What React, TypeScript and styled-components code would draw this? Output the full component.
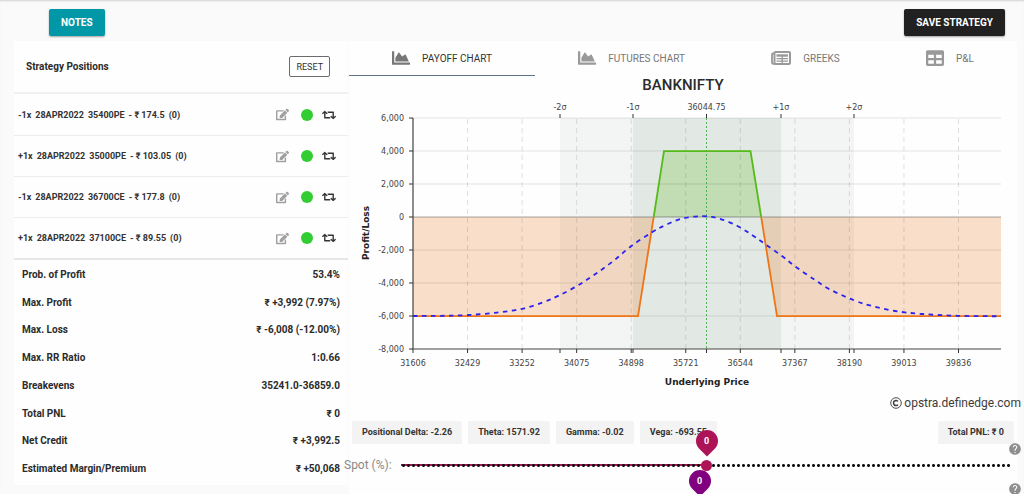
import React, { useState } from "react";
import styled, { createGlobalStyle } from "styled-components";
import { FaChartArea, FaEdit, FaRetweet, FaTable } from "react-icons/fa";
import { MdHelp } from "react-icons/md";

const GlobalStyle = createGlobalStyle`
  *, *::before, *::after { box-sizing: border-box; }
  html { scrollbar-width: none; }
  body {
    margin: 0;
    background: #fafafa;
    color: #2b2b2b;
    font-family: Roboto, "Liberation Sans", sans-serif;
    font-size: 10px;
  }
  button { font-family: inherit; cursor: pointer; }
`;

const Page = styled.div`
  min-height: 100vh;
  overflow: hidden;
  box-shadow: inset 0 2px 2px -1px rgba(0, 0, 0, 0.16);
`;

const Toolbar = styled.header`
  display: flex;
  justify-content: space-between;
  padding: 9px 19px 5px 49px;
`;

const RaisedButton = styled.button<{ $bg: string }>`
  height: 27px;
  padding: 0 12px;
  border: 0;
  border-radius: 2px;
  background: ${(p) => p.$bg};
  color: #fff;
  font-size: 10px;
  font-weight: 700;
  box-shadow: 0 1px 2px rgba(0, 0, 0, 0.35);
`;

const Columns = styled.main`
  display: grid;
  grid-template-columns: minmax(0, 1fr) minmax(0, 2fr);
  gap: 1px;
  align-items: start;
  padding: 0 7px 0 14px;
`;

const Card = styled.section`
  background: #fefefe;
  border-radius: 2px;
`;

const PositionsHeader = styled.div`
  display: flex;
  align-items: center;
  justify-content: space-between;
  height: 53px;
  padding: 0 18px 0 12px;
  border-bottom: 2px solid #f0f0f0;
`;

const PositionsTitle = styled.h2`
  margin: 0;
  font-size: 10px;
  font-weight: 700;
`;

const OutlineButton = styled.button`
  height: 21px;
  padding: 0 6px;
  border: 1px solid #6b6b6b;
  border-radius: 2px;
  background: #fff;
  color: #333;
  font-size: 9px;
`;

const PositionList = styled.ul`
  margin: 0;
  padding: 0;
  list-style: none;
  border-bottom: 2px solid #e6e6e6;
`;

const PositionRow = styled.li`
  display: flex;
  align-items: center;
  justify-content: space-between;
  height: 41px;
  padding: 0 12px 0 4px;
  font-size: 9px;
  font-weight: 700;
  color: #333;

  & + & {
    border-top: 1px solid #ededed;
  }
`;

const Legs = styled.span`
  display: flex;
  gap: 4px;
  white-space: nowrap;
`;

const RowActions = styled.span`
  display: flex;
  align-items: center;
`;

const IconButton = styled.button<{ $color: string; $size: number }>`
  display: flex;
  padding: 0;
  border: 0;
  background: none;
  color: ${(p) => p.$color};
  font-size: ${(p) => p.$size}px;
`;

const StatusDot = styled.button`
  width: 12px;
  height: 12px;
  margin: 0 9px 0 12px;
  padding: 0;
  border: 0;
  border-radius: 50%;
  background: #32cd32;
`;

const Stats = styled.dl`
  display: flex;
  flex-direction: column;
  justify-content: space-between;
  min-height: 225px;
  margin: 0;
  padding: 5px 8px 6px;
`;

const Stat = styled.div`
  display: flex;
  justify-content: space-between;
  font-size: 10px;
  font-weight: 700;
  line-height: 20px;

  dt, dd { margin: 0; }
`;

const Tabs = styled.div`
  display: flex;
  height: 35px;
`;

const Tab = styled.button<{ $active?: boolean }>`
  display: flex;
  flex: 1 1 auto;
  align-items: center;
  justify-content: center;
  gap: 12px;
  padding: 0;
  border: 0;
  border-bottom: 1px solid ${(p) => (p.$active ? "#60758c" : "transparent")};
  background: none;
  color: ${(p) => (p.$active ? "#333" : "#777")};
  font-size: 10px;
  white-space: nowrap;

  svg { color: ${(p) => (p.$active ? "#777" : "#999")}; }
`;

const ChartTitle = styled.h1`
  margin: 0;
  color: #2b2b2b;
  font-size: 15px;
  font-weight: 500;
  line-height: 18px;
  text-align: center;
`;

const ChartSvg = styled.svg`
  display: block;
  width: 100%;
  font-family: "DejaVu Sans", Verdana, sans-serif;
  font-size: 8px;
  fill: #444;
`;

const AxisTitle = styled.text`
  font-size: 9px;
  font-weight: 700;
  fill: #222;
`;

const Credit = styled.p`
  display: flex;
  align-items: center;
  justify-content: flex-end;
  gap: 2px;
  margin: 0 -4px 0 0;
  color: #3c3c3c;
  font-size: 12px;
  line-height: 18px;
`;

const CopyrightMark = styled.svg`
  width: 12px;
  height: 12px;
`;

const Chips = styled.div`
  display: flex;
  gap: 6px;
  margin-top: 9px;
  padding: 0 3px;

  & > :last-child { margin-left: auto; }
`;

const Chip = styled.span`
  padding: 0 10px;
  border-radius: 2px;
  background: #f3f3f3;
  color: #333;
  font-size: 9px;
  font-weight: 700;
  line-height: 23px;
  white-space: nowrap;
`;

const SliderRow = styled.div`
  display: flex;
  align-items: center;
  height: 40px;
  margin: 0 -5px;

  ${Chips} + & { margin-top: 1px; }
`;

const SliderLabel = styled.label`
  flex: none;
  width: 57px;
  color: #888;
  font-size: 12px;
`;

const SliderTrack = styled.div`
  position: relative;
  display: flex;
  flex: 1;
`;

const Range = styled.input<{ $color: string; $fill: number }>`
  width: 100%;
  height: 12px;
  margin: 0;
  appearance: none;
  background:
    radial-gradient(circle at center, #111 1px, transparent 2px) 0 center / 5px 5px round no-repeat,
    linear-gradient(${(p) => p.$color}, ${(p) => p.$color}) 0 center / ${(p) => p.$fill}% 2px no-repeat;

  &::-webkit-slider-thumb {
    appearance: none;
    width: 11px;
    height: 11px;
    border-radius: 50%;
    background: ${(p) => p.$color};
  }
`;

const Pin = styled.output<{ $color: string }>`
  position: absolute;
  bottom: 19px;
  width: 22px;
  height: 22px;
  margin-left: -11px;
  color: #fff;
  font-size: 9px;
  font-weight: 700;
  line-height: 22px;
  text-align: center;
  isolation: isolate;

  &::before {
    content: "";
    position: absolute;
    inset: 0;
    z-index: -1;
    border-radius: 50% 50% 0 50%;
    background: ${(p) => p.$color};
    transform: rotate(45deg);
  }
`;

const HelpButton = styled(IconButton)`
  align-self: flex-start;
  margin: -3px 0 0 -4px;
`;

const positions = [
  ["-1x", "28APR2022", "35400PE", "- ₹ 174.5", "(0)"],
  ["+1x", "28APR2022", "35000PE", "- ₹ 103.05", "(0)"],
  ["-1x", "28APR2022", "36700CE", "- ₹ 177.8", "(0)"],
  ["+1x", "28APR2022", "37100CE", "- ₹ 89.55", "(0)"],
];

const stats = [
  ["Prob. of Profit", "53.4%"],
  ["Max. Profit", "₹ +3,992 (7.97%)"],
  ["Max. Loss", "₹ -6,008 (-12.00%)"],
  ["Max. RR Ratio", "1:0.66"],
  ["Breakevens", "35241.0-36859.0"],
  ["Total PNL", "₹ 0"],
  ["Net Credit", "₹ +3,992.5"],
  ["Estimated Margin/Premium", "₹ +50,068"],
];

const LEFT = 64;
const RIGHT = 652;
const TOP = 24;
const BOTTOM = 255;
const xOf = (price: number) => LEFT + ((price - 31606) / 823) * 54.55;
const yOf = (value: number) => TOP + ((6000 - value) / 14000) * (BOTTOM - TOP);

const yTicks = [6000, 4000, 2000, 0, -2000, -4000, -6000, -8000];
const xTicks = Array.from({ length: 11 }, (_, i) => 31606 + i * 823);
const sigmas = [
  { label: "-2σ", x: 211 },
  { label: "-1σ", x: 284 },
  { label: "36044.75", x: 357.5 },
  { label: "+1σ", x: 432 },
  { label: "+2σ", x: 505 },
];

// Today's profit curve as [x, y] in chart units.
const curve: [number, number][] = [
  [64, 222], [92, 221.8], [119, 221], [148, 218.6], [173, 214.8], [194, 208.3],
  [210, 201.5], [228, 192], [246, 180.3], [264, 167.3], [282, 152.3], [303, 138.3],
  [317, 130.8], [333, 124.6], [353, 122.2], [370, 124.5], [388, 131.7], [403, 141],
  [416, 150], [433, 162], [446, 172.3], [466, 186], [481, 195.5], [505, 206.3],
  [523, 212], [546, 217], [573, 220], [609, 221.8], [652, 222.3],
];

function smooth(points: [number, number][]) {
  let d = `M${points[0][0]} ${points[0][1]}`;
  for (let i = 0; i < points.length - 1; i++) {
    const a = points[Math.max(i - 1, 0)];
    const b = points[i];
    const c = points[i + 1];
    const e = points[Math.min(i + 2, points.length - 1)];
    d += `C${b[0] + (c[0] - a[0]) / 6} ${b[1] + (c[1] - a[1]) / 6} ${c[0] - (e[0] - b[0]) / 6} ${c[1] - (e[1] - b[1]) / 6} ${c[0]} ${c[1]}`;
  }
  return d;
}

function PayoffChart() {
  const zero = yOf(0);
  const loss = yOf(-6008);
  const gain = yOf(3992);
  return (
    <ChartSvg viewBox="0 0 668 300" role="img" aria-label="Payoff chart">
      <rect x={211} y={TOP} width={73} height={BOTTOM - TOP} fill="#f3f5f4" />
      <rect x={432} y={TOP} width={73} height={BOTTOM - TOP} fill="#f3f5f4" />
      <rect x={284} y={TOP} width={148} height={BOTTOM - TOP} fill="#e2e8e4" />
      <path d={`M${LEFT} ${zero}H304.7L289 ${loss}H${LEFT}Z`} fill="rgba(235,127,43,.25)" />
      <path d={`M412.2 ${zero}H${RIGHT}V${loss}H428Z`} fill="rgba(235,127,43,.25)" />
      <path d={`M304.7 ${zero}L315 ${gain}H401.5L412.2 ${zero}Z`} fill="rgba(119,192,71,.3)" />
      {yTicks.slice(0, -1).map((v) => (
        <line key={v} x1={LEFT} x2={RIGHT} y1={yOf(v)} y2={yOf(v)} stroke={v ? "#000" : "#222"} strokeOpacity={v ? 0.1 : 0.4} />
      ))}
      {xTicks.slice(1).map((p) => (
        <line key={p} x1={xOf(p)} x2={xOf(p)} y1={BOTTOM} y2={TOP} stroke="#000" strokeOpacity={0.12} strokeDasharray="5 4" />
      ))}
      <line x1={357.5} x2={357.5} y1={TOP} y2={BOTTOM} stroke="#4fb04f" strokeDasharray="2 2" />
      <path d={`M${LEFT} ${loss}H289L304.7 ${zero}M412.2 ${zero}L428 ${loss}H${RIGHT}`} fill="none" stroke="#ee7518" strokeWidth={1.8} />
      <path d={`M304.7 ${zero}L315 ${gain}H401.5L412.2 ${zero}`} fill="none" stroke="#55bb1a" strokeWidth={1.8} />
      <path d={smooth(curve)} fill="none" stroke="#2a22f0" strokeWidth={1.8} strokeDasharray="4.5 4.5" />
      <path d={`M${LEFT} ${TOP}V${BOTTOM}H${RIGHT}`} fill="none" stroke="#444" strokeWidth={1.2} />
      {yTicks.map((v) => (
        <g key={v}>
          <line x1={LEFT - 4} x2={LEFT} y1={yOf(v)} y2={yOf(v)} stroke="#333" />
          <text x={55} y={yOf(v) + 3} textAnchor="end">{v.toLocaleString("en-US")}</text>
        </g>
      ))}
      {xTicks.map((p) => (
        <g key={p}>
          <line x1={xOf(p)} x2={xOf(p)} y1={BOTTOM} y2={BOTTOM + 4} stroke="#333" />
          <text x={xOf(p)} y={BOTTOM + 17} textAnchor="middle">{p}</text>
        </g>
      ))}
      {sigmas.map((s) => (
        <g key={s.label}>
          <line x1={s.x} x2={s.x} y1={TOP - 4} y2={TOP} stroke="#333" />
          <line x1={s.x} x2={s.x} y1={BOTTOM} y2={BOTTOM + 4} stroke="#333" />
          <text x={s.x} y={TOP - 8} textAnchor="middle">{s.label}</text>
        </g>
      ))}
      <AxisTitle x={358} y={BOTTOM + 36} textAnchor="middle">Underlying Price</AxisTitle>
      <AxisTitle transform="translate(20 139) rotate(-90)" textAnchor="middle">Profit/Loss</AxisTitle>
    </ChartSvg>
  );
}

function SheetIcon() {
  return (
    <svg width="20" height="14" viewBox="0 0 20 14" fill="none" stroke="currentColor" aria-hidden="true">
      <rect x="3.5" y="1" width="15.5" height="12" rx="1" strokeWidth="2" />
      <path d="M3.5 2.5H1.8Q1 2.5 1 3.5V11.5Q1 13 3.5 13" strokeWidth="1.8" />
      <path d="M5.5 4.5H17" strokeWidth="2.4" />
      <path d="M5.5 7.6H17M5.5 10.2H17M11.2 5V12" strokeWidth="1.3" />
    </svg>
  );
}

function PercentSlider(props: { id: string; label?: string; color: string; limit: number; start: number; shown: (v: number) => number; name: string }) {
  const [value, setValue] = useState(props.start);
  const fill = ((value + props.limit) / (2 * props.limit)) * 100;
  return (
    <SliderRow>
      <SliderLabel htmlFor={props.id}>{props.label}</SliderLabel>
      <SliderTrack>
        <Range
          id={props.id}
          type="range"
          aria-label={props.name}
          min={-props.limit}
          max={props.limit}
          step={0.5}
          value={value}
          $color={props.color}
          $fill={fill}
          onChange={(e) => setValue(Number(e.target.value))}
        />
        <Pin htmlFor={props.id} $color={props.color} style={{ left: `${fill}%` }}>
          {props.shown(value)}
        </Pin>
      </SliderTrack>
      <HelpButton type="button" aria-label={`About ${props.name}`} $color="#8e8e8e" $size={14}>
        <MdHelp />
      </HelpButton>
    </SliderRow>
  );
}

export default function App() {
  return (
    <Page>
      <GlobalStyle />
      <Toolbar>
        <RaisedButton type="button" $bg="#0097a7">NOTES</RaisedButton>
        <RaisedButton type="button" $bg="#212121">SAVE STRATEGY</RaisedButton>
      </Toolbar>
      <Columns>
        <Card>
          <PositionsHeader>
            <PositionsTitle>Strategy Positions</PositionsTitle>
            <OutlineButton type="button">RESET</OutlineButton>
          </PositionsHeader>
          <PositionList>
            {positions.map((legs) => (
              <PositionRow key={legs[2]}>
                <Legs>
                  {legs.map((leg) => <span key={leg}>{leg}</span>)}
                </Legs>
                <RowActions>
                  <IconButton type="button" aria-label="Edit" $color="#a0a0a0" $size={13}><FaEdit /></IconButton>
                  <StatusDot type="button" aria-label="Enabled" />
                  <IconButton type="button" aria-label="Reverse" $color="#333" $size={14}><FaRetweet /></IconButton>
                </RowActions>
              </PositionRow>
            ))}
          </PositionList>
          <Stats>
            {stats.map(([name, value]) => (
              <Stat key={name}>
                <dt>{name}</dt>
                <dd>{value}</dd>
              </Stat>
            ))}
          </Stats>
        </Card>
        <Card>
          <Tabs role="tablist">
            <Tab role="tab" aria-selected="true" $active><FaChartArea size={18} />PAYOFF CHART</Tab>
            <Tab role="tab" aria-selected="false"><FaChartArea size={18} />FUTURES CHART</Tab>
            <Tab role="tab" aria-selected="false"><SheetIcon />GREEKS</Tab>
            <Tab role="tab" aria-selected="false"><FaTable size={18} />P&amp;L</Tab>
          </Tabs>
          <ChartTitle>BANKNIFTY</ChartTitle>
          <PayoffChart />
          <Credit>
            <CopyrightMark viewBox="0 0 12 12" fill="none" stroke="currentColor" role="img" aria-label="Copyright">
              <circle cx="6" cy="6" r="5.3" strokeWidth="0.9" />
              <path d="M8 4.4A2.5 2.6 0 1 0 8 7.6" strokeWidth="1.5" />
            </CopyrightMark>
            opstra.definedge.com
          </Credit>
          <Chips>
            <Chip>Positional Delta: -2.26</Chip>
            <Chip>Theta: 1571.92</Chip>
            <Chip>Gamma: -0.02</Chip>
            <Chip>Vega: -693.55</Chip>
            <Chip>Total PNL: ₹ 0</Chip>
          </Chips>
          <PercentSlider id="spot" label="Spot (%):" name="Spot" color="#ad1457" limit={30} start={0} shown={(v) => v} />
          <PercentSlider id="iv" name="Volatility" color="#800080" limit={45} start={-1} shown={(v) => v + 1} />
        </Card>
      </Columns>
    </Page>
  );
}
